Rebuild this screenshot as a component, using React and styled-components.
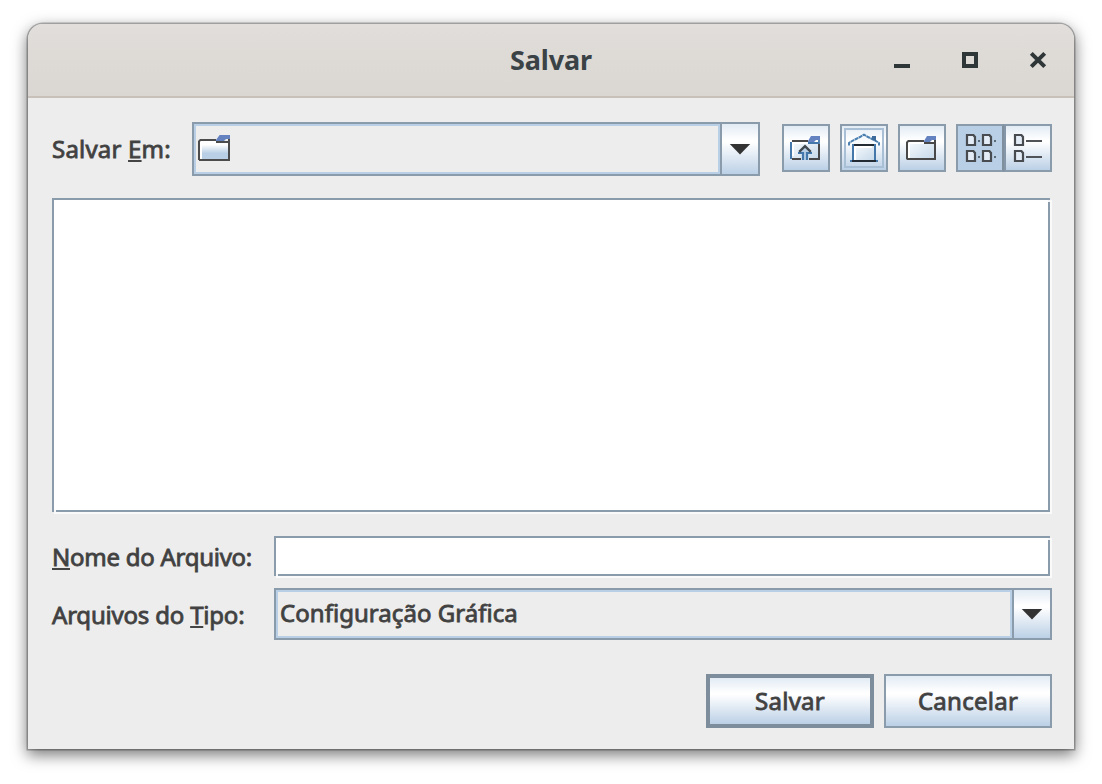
import React from "react";
import styled, { createGlobalStyle, css } from "styled-components";

const Global = createGlobalStyle`
  * { box-sizing: border-box; }
  body { margin: 0; background: #fff; overflow: hidden; }
`;

const line = "#8a9cac";
const metal = "linear-gradient(#e2ebf4 0%, #ffffff 32%, #ffffff 36%, #bbd0e6 100%)";

const Desktop = styled.div`
  width: 1102px;
  height: 784px;
  padding: 24px 28px 35px;
  font: 400 24px/34px "Noto Sans", sans-serif;
  color: #404040;
`;

const Dialog = styled.div`
  height: 725px;
  width: 1046px;
  display: flex;
  flex-direction: column;
  background: #ededed;
  border-radius: 15px 15px 0 0;
  box-shadow: 0 0 0 1.5px rgba(0, 0, 0, 0.27), 0 5px 15px 1px rgba(0, 0, 0, 0.53);
`;

const TitleBar = styled.header`
  height: 74px;
  flex: none;
  display: grid;
  grid-template-columns: 1fr auto 1fr;
  align-items: center;
  border-radius: 15px 15px 0 0;
  border-bottom: 2px solid #c8c1ba;
  background: linear-gradient(#e1dedb, #dad6d1);
`;

const Title = styled.h1`
  grid-column: 2;
  margin: 0;
  font-size: 27px;
  font-weight: 700;
  line-height: 36px;
  letter-spacing: -0.1px;
  padding-bottom: 1px;
  color: #3a4246;
`;

const WindowControls = styled.div`
  display: flex;
  justify-content: flex-end;
  gap: 48px;
  padding-right: 26px;
`;

const ControlIcon = styled.svg`
  width: 20px;
  height: 20px;
  display: block;
`;

const Body = styled.main`
  display: flex;
  flex-direction: column;
  padding: 24px 22px 0 24px;
`;

const Row = styled.div`
  display: flex;
  align-items: flex-start;
  height: ${(p) => p.$h}px;
  margin-bottom: ${(p) => p.$gap || 0}px;
  justify-content: ${(p) => (p.$end ? "flex-end" : "flex-start")};
`;

const text = css`
  -webkit-text-stroke: 0.85px #444;
  white-space: pre;
`;

const Label = styled.label`
  ${text}
  width: ${(p) => p.$w}px;
  flex: none;
  padding-top: ${(p) => p.$top}px;
  letter-spacing: ${(p) => p.$ls || 0}px;
`;

const Mnemonic = styled.span`
  text-decoration: underline;
  text-decoration-thickness: 2px;
  text-underline-offset: 2px;
  text-decoration-skip-ink: none;
`;

const Combo = styled.div`
  display: flex;
  width: ${(p) => p.$w}px;
  height: ${(p) => p.$h}px;
  border: 2px solid ${line};
`;

const ComboValue = styled.div`
  ${text}
  flex: 1;
  display: flex;
  align-items: center;
  padding: 0 2px ${(p) => (p.$lift ?? 4)}px;
  border: 2px solid #b8cfe5;
  letter-spacing: ${(p) => p.$ls || 0}px;
`;

const ComboArrow = styled.button`
  width: 38px;
  padding: 0;
  border: 0;
  border-left: 2px solid ${line};
  background: ${metal};
  display: flex;
  align-items: center;
  justify-content: center;
`;

const Triangle = styled.svg`
  width: 22px;
  height: 12px;
`;

const Tools = styled.div`
  display: flex;
  gap: 10px;
  padding: 2px 0 0 22px;
`;

const ToolButton = styled.button`
  width: 48px;
  height: 48px;
  padding: 0;
  display: flex;
  align-items: center;
  justify-content: center;
  border: 2px solid ${line};
  background: ${metal};
`;

const FocusRing = styled.span`
  display: flex;
  width: 40px;
  height: 40px;
  align-items: center;
  justify-content: center;
  border: 2px solid #a9bfd5;
`;

const ViewToggle = styled.div`
  display: flex;
`;

const ViewButton = styled(ToolButton)`
  ${(p) => p.$pressed && css`background: #b8cfe5;`}
  &:first-child { border-right-color: #7f8f9e; }
  &:last-child { border-left-color: #8496a8; }
`;

const Icon = styled.svg`
  width: 32px;
  height: 32px;
  flex: none;
  display: block;
`;

const Sunken = styled.div`
  width: ${(p) => p.$w}px;
  height: ${(p) => p.$h}px;
  background: #fff;
  border: 2px solid ${line};
  box-shadow: 2px 2px 0 #fafafa;
  position: relative;
  &::before, &::after {
    content: "";
    position: absolute;
    width: 2px;
    height: 2px;
    background: #f5f6f7;
  }
  &::before { right: -2px; top: 0; }
  &::after { left: 0; bottom: -2px; }
`;

const TextInput = styled.input`
  display: block;
  width: 100%;
  height: 100%;
  padding: 0 4px;
  border: 0;
  background: transparent;
  font: inherit;
  color: inherit;
  outline: none;
`;

const PushButton = styled.button`
  width: 168px;
  height: 54px;
  margin-left: 10px;
  padding: 0 0 1px;
  font: inherit;
  color: inherit;
  ${text}
  letter-spacing: 0.25px;
  border: ${(p) => (p.$default ? "4px solid #7d8d9c" : `2px solid ${line}`)};
  background: ${metal};
`;

function Defs() {
  return (
    <defs>
      <linearGradient id="fill" x1="0" y1="0" x2="0" y2="1">
        <stop offset="0.1" stopColor="#fff" />
        <stop offset="0.65" stopColor="#b8cfe5" />
      </linearGradient>
      <linearGradient id="pale" x1="0" y1="0" x2="1" y2="1">
        <stop offset="0" stopColor="#f6fafd" />
        <stop offset="1" stopColor="#c8daea" />
      </linearGradient>
    </defs>
  );
}

function FolderIcon() {
  return (
    <Icon viewBox="0 0 16 16">
      <Defs />
      <path d="M.5 5 1 4.5H9.5L10 5.5H15.5V14.5H.5Z" fill="#fff" />
      <path d="M2 6H15V14H2Z" fill="url(#fill)" />
      <path d="M.5 14.5V5.2L1.2 4.5H9M9 5.5H15.5M15.5 3V14.5H.5" fill="none" stroke="#4c4c4c" />
      <path d="M9 4.5 10.8 2H16V4H14L13 5H9Z" fill="#6382bf" />
    </Icon>
  );
}

function NewFolderIcon() {
  return (
    <Icon viewBox="0 0 16 16">
      <path d="M1 5H14V13H1Z" fill="url(#pale)" />
      <path d="M1.5 13V5.5H9" fill="none" stroke="#fff" />
      <path d="M.5 13.5V5.2L1.2 4.5H9M9 5.5H14.5M14.5 4V13.5H.3" fill="none" stroke="#484848" />
      <path d="M9 4.5 10.5 2H15V4H13L12 5H9Z" fill="#6382bf" />
    </Icon>
  );
}

function UpFolderIcon() {
  return (
    <Icon viewBox="0 0 16 16">
      <path d="M1 5H14V13H1Z" fill="url(#pale)" />
      <path d="M1.5 12V5.5H9" fill="none" stroke="#fff" />
      <path d="M1 4.5H9" fill="none" stroke="#484848" />
      <path d="M.5 5V13.5" fill="none" stroke="#4478ab" />
      <path d="M14.5 6V13.5H9.5M5.5 13.5H1" fill="none" stroke="#484848" />
      <path d="M9 4.5 10.5 2H15V4H13L12 5H9Z" fill="#6382bf" />
      <path d="M9 5.5H14.5V4" fill="none" stroke="#4478ab" strokeWidth=".9" />
      <path d="M7.5 7.4 10.7 10.6H8.6V14H6.4V10.6H4.3Z" fill="#b8cfe5" />
      <path d="M4 10.5H6.5V14M8.5 14V10.5H11" fill="none" stroke="#4478ab" strokeWidth="1.1" />
      <path d="M4.6 9.9 7.5 7.1 10.4 9.9" fill="none" stroke="#404850" strokeWidth="1.2" />
    </Icon>
  );
}

function HomeIcon() {
  return (
    <Icon viewBox="0 0 16 16">
      <path d="M1 6 8 1.5 15 6Z" fill="#f8fbfd" />
      <path d="M3 7H13V14H3Z" fill="url(#pale)" />
      <path d="M3.5 14V7.5H12" fill="none" stroke="#fff" />
      <path d="M2.5 6V14M13.5 6V14" stroke="#4478ab" />
      <path d="M.5 6.7V5.5L2 4.5 4 3.5 6 2.5 8 1.3 10 2.5 12 3.5 14 4.5 15.5 5.5V6.7" fill="none" stroke="#4b80b0" strokeWidth="1" strokeDasharray="2 .25" />
      <path d="M12 2H14V4.8L12 3.8Z" fill="#3d6c9c" />
      <path d="M3 6.5H13M2 14.5H14" stroke="#222b33" />
      <path d="M1 14.5H2M14 14.5H15" stroke="#4478ab" />
    </Icon>
  );
}

function FileGlyph({ x, y }) {
  return (
    <path
      d={`M${x + 0.5} ${y + 0.5}H${x + 3.7}L${x + 4.5} ${y + 1.5}V${y + 5.5}H${x + 0.5}Z`}
      fill="#e4edf7"
      stroke="#484b50"
      strokeWidth="1.1"
    />
  );
}

function GridIcon() {
  return (
    <Icon viewBox="0 0 16 16">
      <FileGlyph x={1} y={1} />
      <FileGlyph x={9} y={1} />
      <FileGlyph x={1} y={9} />
      <FileGlyph x={9} y={9} />
      <path d="M7 4.5H8M15 4.5H16M7 12.5H8M15 12.5H16" stroke="#5d6975" />
    </Icon>
  );
}

function ListIcon() {
  return (
    <Icon viewBox="0 0 16 16">
      <FileGlyph x={1} y={1} />
      <FileGlyph x={1} y={9} />
      <path d="M7 4.5H15M7 12.5H15" stroke="#505358" />
    </Icon>
  );
}

function DownArrow() {
  return (
    <Triangle viewBox="0 0 22 12">
      <path d="M.8 1H21.2L11 11.4Z" fill="#333" />
    </Triangle>
  );
}

export default function App() {
  return (
    <Desktop>
      <Global />
      <Dialog>
        <TitleBar>
          <Title>Salvar</Title>
          <WindowControls>
            <ControlIcon viewBox="0 0 20 20"><path d="M2 16H18" stroke="#2e3638" strokeWidth="4" /></ControlIcon>
            <ControlIcon viewBox="0 0 20 20"><path d="M4 4H16V16H4Z" fill="none" stroke="#2e3638" strokeWidth="4" /></ControlIcon>
            <ControlIcon viewBox="0 0 20 20"><path d="M3.3 3.3 16.7 16.7M16.7 3.3 3.3 16.7" stroke="#2e3638" strokeWidth="4" /></ControlIcon>
          </WindowControls>
        </TitleBar>
        <Body>
          <Row $h={54} $gap={22}>
            <Label $w={140} $top={10} $ls={0.2}>Salvar <Mnemonic>E</Mnemonic>m:</Label>
            <Combo $w={568} $h={54}>
              <ComboValue><FolderIcon /></ComboValue>
              <ComboArrow><DownArrow /></ComboArrow>
            </Combo>
            <Tools>
              <ToolButton><UpFolderIcon /></ToolButton>
              <ToolButton><FocusRing><HomeIcon /></FocusRing></ToolButton>
              <ToolButton><NewFolderIcon /></ToolButton>
              <ViewToggle>
                <ViewButton $pressed><GridIcon /></ViewButton>
                <ViewButton><ListIcon /></ViewButton>
              </ViewToggle>
            </Tools>
          </Row>
          <Row $h={314} $gap={24}>
            <Sunken $w={998} $h={314} />
          </Row>
          <Row $h={40} $gap={12}>
            <Label $w={222} $top={4} $ls={-0.26}><Mnemonic>N</Mnemonic>ome do Arquivo:</Label>
            <Sunken $w={776} $h={40}><TextInput type="text" /></Sunken>
          </Row>
          <Row $h={52} $gap={34}>
            <Label $w={222} $top={10} $ls={-0.2}>Arquivos do <Mnemonic>T</Mnemonic>ipo:</Label>
            <Combo $w={778} $h={52}>
              <ComboValue $lift={2} $ls={0.04}>Configuração Gráfica</ComboValue>
              <ComboArrow><DownArrow /></ComboArrow>
            </Combo>
          </Row>
          <Row $h={54} $end>
            <PushButton $default>Salvar</PushButton>
            <PushButton>Cancelar</PushButton>
          </Row>
        </Body>
      </Dialog>
    </Desktop>
  );
}
